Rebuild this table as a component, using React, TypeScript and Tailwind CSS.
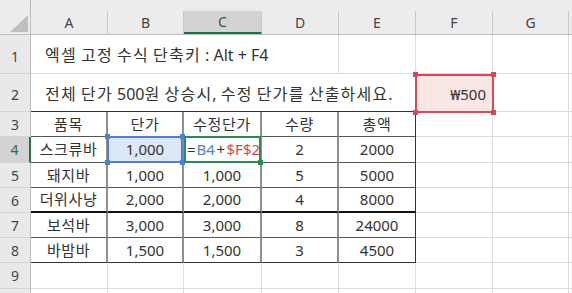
import React from 'react';

const FONT = { fontFamily: '"Noto Sans", "Noto Sans CJK KR", sans-serif' };

const COLS = ['A', 'B', 'C', 'D', 'E', 'F', 'G'];

const rows = [
  ['품목', '단가', '수정단가', '수량', '총액'],
  ['스크류바', '1,000', '', '2', '2000'],
  ['돼지바', '1,000', '1,000', '5', '5000'],
  ['더위사냥', '2,000', '2,000', '4', '8000'],
  ['보석바', '3,000', '3,000', '8', '24000'],
  ['바밤바', '1,500', '1,500', '3', '4500'],
];

// hangul in the screenshot is set wider than Noto's, so space those runs out a bit
function Ko({ text, wide }: { text: string; wide?: boolean }) {
  const parts = text.split(/([\uAC00-\uD7A3]+)/);
  return (
    <span className="whitespace-pre">
      {parts.map((p, i) =>
        /[\uAC00-\uD7A3]/.test(p) ? (
          <span key={i} className={wide ? 'tracking-[1.2px]' : 'tracking-[0.6px]'}>
            {p}
          </span>
        ) : (
          <span key={i}>{p}</span>
        )
      )}
    </span>
  );
}

function Corner({ pos, color }: { pos: string; color: string }) {
  return <div className={`absolute w-[5px] h-[5px] ${pos} ${color}`} />;
}

function RowHead({ n, active, tall }: { n: number; active?: boolean; tall?: boolean }) {
  return (
    <div
      className={`flex justify-center border-b border-[#d4d4d4] text-[14px] ${
        tall ? 'items-end pb-[6px]' : 'items-center'
      } ${
        active
          ? 'bg-[#d3d3d3] text-[#2b6b46] border-r-2 border-r-[#217346]'
          : 'bg-[#e9e9e9] text-[#444] border-r border-r-[#bdbdbd]'
      }`}
    >
      {n}
    </div>
  );
}

function Blank({ last }: { last?: boolean }) {
  return <div className={`bg-white border-b border-[#dcdcdc] ${last ? '' : 'border-r'}`} />;
}

export default function App() {
  return (
    <div
      className="h-[293px] w-[572px] overflow-hidden bg-white text-[#333]"
      style={FONT}
    >
      <div className="grid grid-cols-[31px_77px_76px_78px_77px_77px_77px_76px_1fr] grid-rows-[35px_39px_38px_25px_26px_25px_25px_25px_25px_26px_1fr] h-full">
        {/* header row */}
        <div className="relative bg-[#ececec] border-b border-r border-[#bdbdbd]">
          <svg className="absolute left-[10px] top-[15px]" width="18" height="17" viewBox="0 0 18 17">
            <polygon points="18,0 18,17 0,17" fill="#bfbfbf" />
          </svg>
        </div>
        {COLS.map(c => (
          <div key={c} className="bg-[#ececec] pt-[11px] border-b border-[#bdbdbd] flex">
            <div
              className={`flex-1 flex items-center justify-center text-[14px] border-r border-r-[#c9c9c9] ${
                c === 'C'
                  ? 'bg-[#d3d3d3] text-[#2b5a40] border-b-2 border-b-[#217346]'
                  : 'text-[#444]'
              }`}
            >
              {c}
            </div>
          </div>
        ))}
        <div className="bg-[#ececec] border-b border-[#bdbdbd]" />

        {/* row 1 */}
        <RowHead n={1} tall />
        <div className="col-span-4 flex items-end pl-[14px] pb-[8px] text-[16px] leading-[20px] border-r border-b border-[#dcdcdc] whitespace-nowrap">
          <Ko wide text="엑셀 고정 수식 단축키 : Alt + F4" />
        </div>
        <Blank />
        <Blank />
        <Blank />
        <Blank last />

        {/* row 2 */}
        <RowHead n={2} tall />
        <div className="col-span-5 flex items-end pl-[14px] pb-[7px] text-[16px] leading-[20px] border-b border-[#333] whitespace-nowrap">
          <Ko wide text="전체 단가 500원 상승시, 수정 단가를 산출하세요." />
        </div>
        <div className="relative bg-[#fbe6e6] flex items-end justify-end pr-[7px] pb-[8px] text-[15px] leading-[20px]">
          ₩500
          <div className="absolute left-[-1px] top-0 right-[-1px] bottom-[-1px] border-2 border-[#d44b57]" />
          <Corner pos="left-[-3px] top-[-2px]" color="bg-[#d44b57]" />
          <Corner pos="right-[-3px] top-[-2px]" color="bg-[#d44b57]" />
          <Corner pos="left-[-3px] bottom-[-3px]" color="bg-[#d44b57]" />
          <Corner pos="right-[-3px] bottom-[-3px]" color="bg-[#d44b57]" />
        </div>
        <Blank />
        <Blank last />

        {/* rows 3-8: table */}
        {rows.map((r, ri) => {
          const rowNum = ri + 3;
          const bottom =
            ri === 3 ? 'border-b-2 border-b-[#111]' : ri === 5 ? 'border-b border-b-[#333]' : 'border-b border-b-[#555]';
          return (
            <React.Fragment key={rowNum}>
              <RowHead n={rowNum} active={rowNum === 4} />
              {r.map((v, ci) => {
                const right = ci === 4 ? 'border-r border-r-[#333]' : 'border-r-2 border-r-[#8f8f8f]';
                if (rowNum === 4 && ci === 1) {
                  return (
                    <div key={ci} className={`relative bg-[#dde7f5] flex items-center justify-center text-[15px] ${right} ${bottom}`}>
                      {v}
                      <div className="absolute left-[-1px] top-[-1px] right-[-1px] bottom-[-1px] border-2 border-[#4f80d2]" />
                      <Corner pos="left-[-3px] top-[-3px]" color="bg-[#4f80d2]" />
                      <Corner pos="right-[-3px] top-[-3px]" color="bg-[#4f80d2]" />
                      <Corner pos="left-[-3px] bottom-[-3px]" color="bg-[#4f80d2]" />
                      <Corner pos="right-[-3px] bottom-[-3px]" color="bg-[#4f80d2]" />
                    </div>
                  );
                }
                if (rowNum === 4 && ci === 2) {
                  return (
                    <div key={ci} className={`relative flex items-center pl-[3px] text-[15px] whitespace-nowrap ${right} ${bottom}`}>
                      <span>=</span>
                      <span className="text-[#4f80d2] ml-[1px]">B4</span>
                      <span className="mx-[1.5px]">+</span>
                      <span className="text-[#d44b57]">$F$2</span>
                      <div className="absolute left-0 top-[-1px] right-[-1px] bottom-[-1px] border-2 border-[#2f8a50]" />
                      <Corner pos="right-[-3px] bottom-[-3px]" color="bg-[#2f8a50]" />
                    </div>
                  );
                }
                return (
                  <div key={ci} className={`flex items-center justify-center text-[15px] whitespace-nowrap ${right} ${bottom}`}>
                    <Ko text={v} />
                  </div>
                );
              })}
              <Blank />
              <Blank />
              <Blank last />
            </React.Fragment>
          );
        })}

        {/* row 9 */}
        <RowHead n={9} />
        {COLS.map(c => (
          <Blank key={c} />
        ))}
        <Blank last />

        {/* row 10 (cut off) */}
        <div className="bg-[#e9e9e9] border-r border-[#bdbdbd]" />
        {COLS.map(c => (
          <div key={c} className="border-r border-[#dcdcdc]" />
        ))}
        <div />
      </div>
    </div>
  );
}
